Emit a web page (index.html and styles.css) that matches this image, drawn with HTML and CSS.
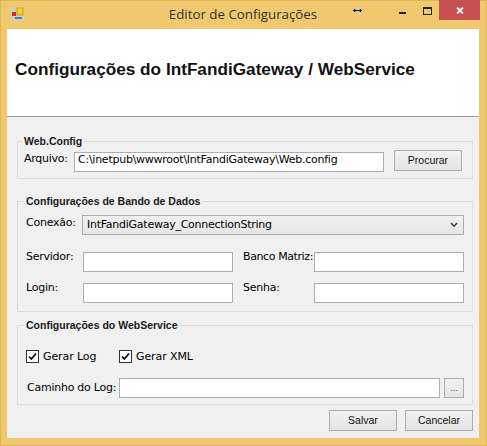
FILE: index.html
```html
<!DOCTYPE html>
<html lang="pt">
<head>
<meta charset="utf-8">
<title>Editor de Configurações</title>
<link rel="stylesheet" href="styles.css">
</head>
<body>
<div class="window">
  <div class="titlebar">
    <svg class="app-icon" width="14" height="14" viewBox="0 0 14 14">
      <rect x="0" y="0" width="14" height="14" fill="#d8cdb0"/>
      <rect x="7" y="1" width="6" height="7" fill="#f4d22a" stroke="#c8a214" stroke-width="1"/>
      <rect x="2" y="5" width="4" height="4" fill="#d42a2a"/>
      <rect x="5" y="10" width="7" height="2" fill="#3d7fd6"/>
    </svg>
    <div class="title">Editor de Configurações</div>
    <div class="controls">
      <div class="cbtn cbtn-min"><span class="min-bar"></span></div>
      <div class="cbtn cbtn-max"><span class="max-box"></span></div>
      <div class="cbtn cbtn-close">
        <svg width="8" height="7" viewBox="0 0 8 7"><path d="M1 0.5 L7 6.5 M7 0.5 L1 6.5" stroke="#fff" stroke-width="1.8"/></svg>
      </div>
    </div>
    <svg class="cursor" width="11" height="7" viewBox="0 0 11 7">
      <path d="M0.5 3.5 L3.5 0.5 L3.5 2.5 L7.5 2.5 L7.5 0.5 L10.5 3.5 L7.5 6.5 L7.5 4.5 L3.5 4.5 L3.5 6.5 Z" fill="#111" stroke="#fff" stroke-width="0.6"/>
    </svg>
  </div>
  <div class="client">
    <div class="header">
      <h1>Configurações do IntFandiGateway / WebService</h1>
    </div>
    <div class="content">
      <div class="group g1">
        <div class="group-title">Web.Config</div>
        <div class="row">
          <span class="label lbl-file">Arquivo:</span>
          <div class="textbox tb-file">C:\inetpub\wwwroot\IntFandiGateway\Web.config</div>
          <div class="btn btn-browse">Procurar</div>
        </div>
      </div>

      <div class="group g2">
        <div class="group-title">Configurações de Bando de Dados</div>
        <div class="row conn-row">
          <span class="label lbl-conn">Conexão:</span>
          <div class="combo">
            <span class="combo-text">IntFandiGateway_ConnectionString</span>
            <svg class="chevron" width="8" height="6" viewBox="0 0 8 6"><path d="M1 1 L4 4.2 L7 1" fill="none" stroke="#444" stroke-width="1.6"/></svg>
          </div>
        </div>
        <div class="fields">
          <span class="label">Servidor:</span>
          <div class="textbox"></div>
          <span class="label lbl-right lbl-tight">Banco Matriz:</span>
          <div class="textbox"></div>
          <span class="label">Login:</span>
          <div class="textbox"></div>
          <span class="label lbl-right">Senha:</span>
          <div class="textbox"></div>
        </div>
      </div>

      <div class="group g3">
        <div class="group-title">Configurações do WebService</div>
        <div class="row check-row">
          <div class="check-item">
            <span class="checkbox"><svg width="11" height="11" viewBox="0 0 11 11"><path d="M2 5.5 L4.4 8 L9 2.5" fill="none" stroke="#111" stroke-width="1.8"/></svg></span>
            <span class="check-label">Gerar Log</span>
          </div>
          <div class="check-item">
            <span class="checkbox"><svg width="11" height="11" viewBox="0 0 11 11"><path d="M2 5.5 L4.4 8 L9 2.5" fill="none" stroke="#111" stroke-width="1.8"/></svg></span>
            <span class="check-label">Gerar XML</span>
          </div>
        </div>
        <div class="row path-row">
          <span class="label lbl-path">Caminho do Log:</span>
          <div class="textbox tb-path"></div>
          <div class="btn btn-dots">...</div>
        </div>
      </div>

      <div class="actions">
        <div class="btn btn-action">Salvar</div>
        <div class="btn btn-action">Cancelar</div>
      </div>
    </div>
  </div>
</div>
</body>
</html>
```
FILE: styles.css
```css
* { box-sizing: border-box; }

html, body {
  margin: 0;
  padding: 0;
  width: 487px;
  height: 446px;
  overflow: hidden;
}

body {
  font-family: "DejaVu Sans", Verdana, sans-serif;
  font-size: 11px;
  color: #000;
  background: #f0c86e;
}

.window {
  width: 487px;
  height: 446px;
  background: #f0c86e;
  padding: 0 8px 8px 7px;
  display: flex;
  flex-direction: column;
  box-shadow: inset 0 0 0 1px #e2b555;
}

/* ---------- title bar ---------- */
.titlebar {
  height: 29px;
  display: grid;
  position: relative;
  flex: none;
}

.titlebar > * { grid-area: 1 / 1; }

.app-icon {
  justify-self: start;
  margin: 7px 0 0 3px;
}

.title {
  justify-self: center;
  align-self: center;
  font-family: "Open Sans", "Noto Sans", sans-serif;
  font-size: 13.3px;
  color: #333;
  margin-top: -1px;
}

.controls {
  justify-self: end;
  align-self: start;
  display: flex;
  margin-right: -1px;
}

.cbtn {
  height: 20px;
  display: flex;
  justify-content: center;
}

.cbtn-min { width: 26px; }
.cbtn-max { width: 24px; }
.cbtn-close {
  width: 41px;
  background: #c75050;
  align-items: center;
}

.min-bar {
  width: 7px;
  height: 2px;
  background: #222;
  margin-top: 12px;
}

.max-box {
  width: 9px;
  height: 8px;
  border: 1px solid #222;
  border-top-width: 2px;
  margin-top: 7px;
}

.cursor {
  position: absolute;
  left: 345px;
  top: 7px;
}

/* ---------- client ---------- */
.client {
  flex: 1;
  background: #f0f0f0;
  display: flex;
  flex-direction: column;
}

.header {
  height: 88px;
  background: #fff;
  border-bottom: 1px solid #a0a0a0;
  display: flex;
  align-items: center;
  padding: 0 0 6px 8px;
  flex: none;
}

.header h1 {
  margin: 0;
  font-family: "Liberation Sans", Arial, sans-serif;
  font-weight: bold;
  font-size: 17.2px;
  color: #111;
}

.content {
  padding: 24px 6px 0 10px;
  display: flex;
  flex-direction: column;
}

/* ---------- group boxes ---------- */
.group {
  border: 1px solid #dcdcdc;
}

.group-title {
  width: fit-content;
  height: 13px;
  line-height: 13px;
  margin: -7px 0 0 -2px;
  padding: 0 2px 0 2px;
  background: #f0f0f0;
  font-family: "Liberation Sans", Arial, sans-serif;
  font-weight: bold;
  font-size: 10.5px;
  color: #1a1a1a;
}

.row {
  display: flex;
  align-items: flex-start;
}

.label {
  line-height: 20px;
  height: 20px;
  letter-spacing: -0.25px;
  white-space: nowrap;
}

.textbox {
  height: 20px;
  background: #fff;
  border: 1px solid #abadb3;
  padding: 0 3px;
  line-height: 13px;
  letter-spacing: -0.25px;
  white-space: nowrap;
  overflow: hidden;
}

.btn {
  height: 21px;
  border: 1px solid #acacac;
  background: linear-gradient(#f1f1f1, #e4e4e4);
  display: flex;
  align-items: center;
  justify-content: center;
  font-family: "Liberation Sans", Arial, sans-serif;
  font-size: 10.5px;
  color: #111;
  padding-bottom: 1px;
}

/* group 1 */
.g1 { padding: 0 10px 6px 6px; }
.g1 .row { margin-top: 2px; height: 22px; }
.lbl-file { width: 50px; margin-top: 2px; line-height: 14px; }
.tb-file { width: 310px; margin-top: 2px; }
.btn-browse { width: 68px; margin-left: 10px; }

/* group 2 */
.g2 {
  margin-top: 22px;
  padding: 0 8px 8px 8px;
}
.conn-row { margin-top: 7px; }
.lbl-conn { width: 56px; line-height: 16px; }

.combo {
  width: 382px;
  height: 20px;
  border: 1px solid #acacac;
  background: linear-gradient(#f0f0f0, #e5e5e5);
  display: flex;
  align-items: center;
  justify-content: space-between;
  padding: 0 5px 2px 4px;
  letter-spacing: -0.25px;
}
.chevron { margin-top: 2px; }

.fields {
  margin-top: 17px;
  display: grid;
  grid-template-columns: 57px 150px 81px 150px;
  row-gap: 11px;
}
.fields .label { line-height: 9px; }
.fields .lbl-right { margin-left: 10px; }
.fields .lbl-tight { letter-spacing: -0.4px; }

/* group 3 */
.g3 {
  margin-top: 13px;
  padding: 0 8px 6px 8px;
}
.check-row {
  margin-top: 18px;
  height: 13px;
  align-items: center;
}
.check-item {
  width: 93px;
  display: flex;
  align-items: center;
}
.checkbox {
  width: 13px;
  height: 13px;
  border: 1px solid #333;
  background: #fff;
  display: flex;
  align-items: center;
  justify-content: center;
}
.check-label {
  margin-left: 4px;
  letter-spacing: -0.1px;
  line-height: 13px;
}

.path-row { margin-top: 15px; }
.lbl-path { width: 93px; padding-left: 1px; line-height: 19px; }
.tb-path { width: 321px; }
.btn-dots {
  width: 20px;
  height: 20px;
  margin-left: 4px;
  font-size: 9px;
  color: #555;
  align-items: flex-end;
  padding-bottom: 4px;
}

/* ---------- action buttons ---------- */
.actions {
  margin-top: 5px;
  display: flex;
  justify-content: flex-end;
  gap: 8px;
}
.btn-action { width: 68px; }
```
